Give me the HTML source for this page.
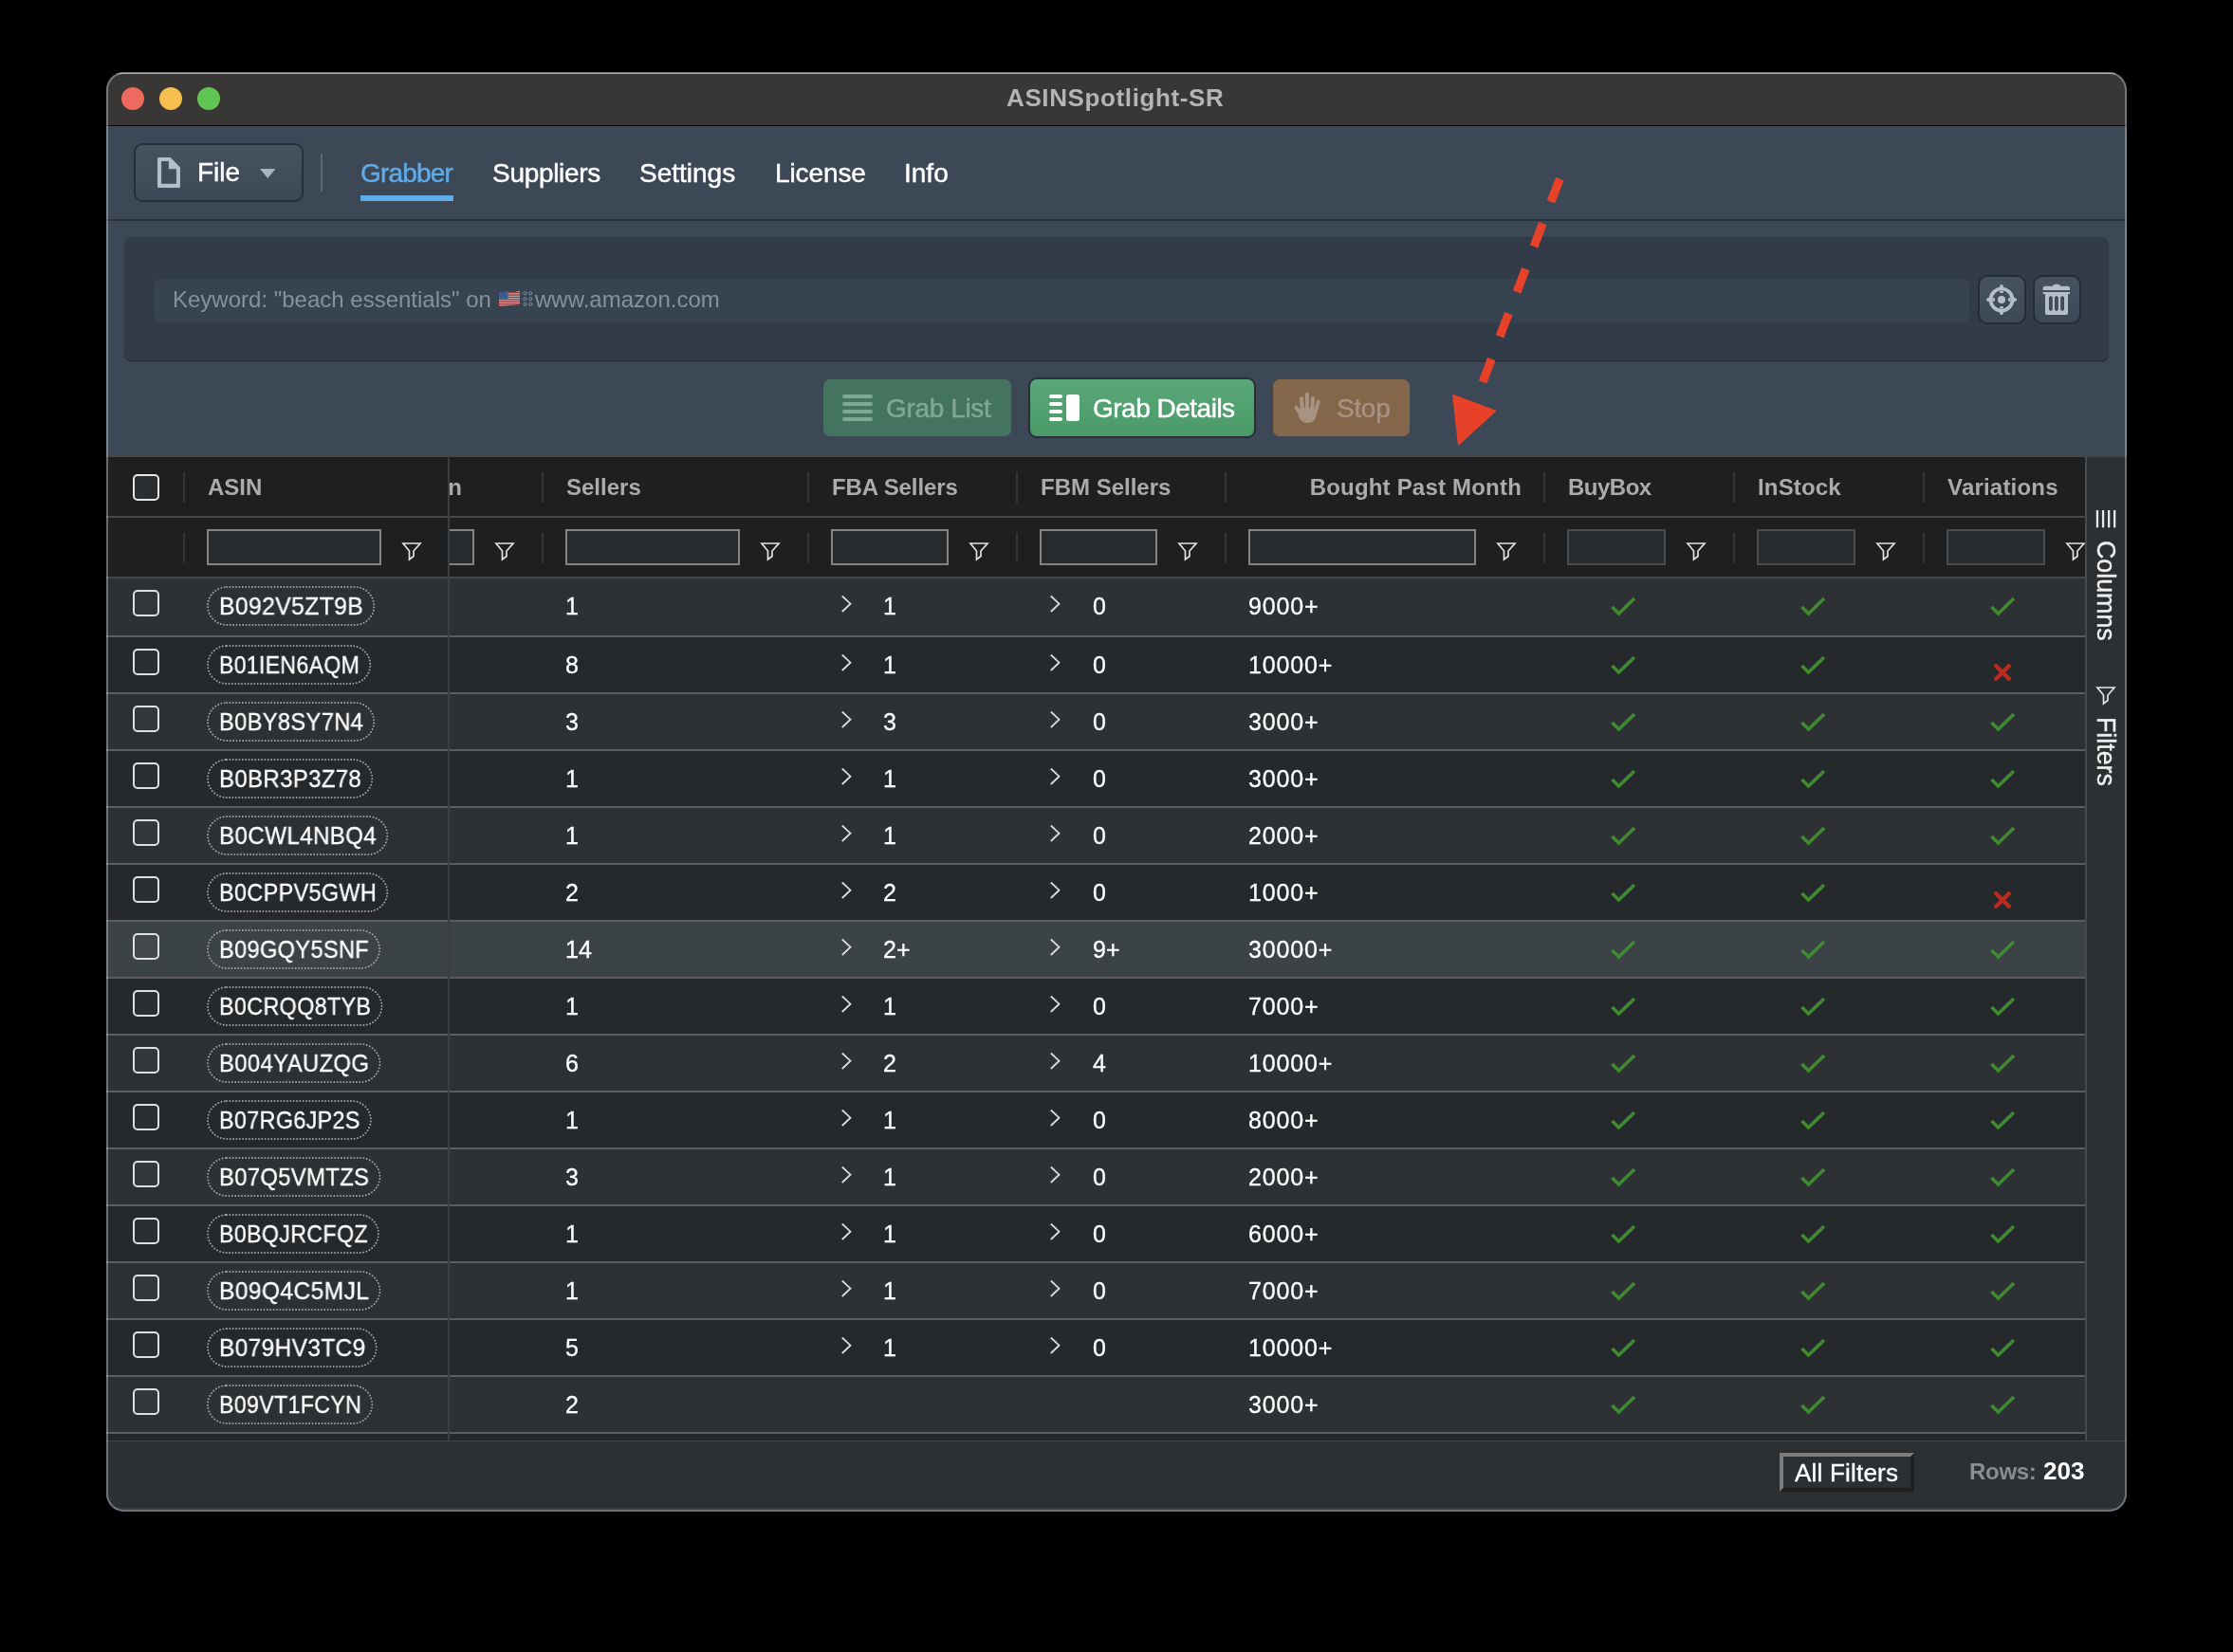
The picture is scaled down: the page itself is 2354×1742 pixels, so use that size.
<!DOCTYPE html>
<html><head><meta charset="utf-8"><title>ASINSpotlight-SR</title>
<style>
html,body{margin:0;padding:0;background:#000;width:2354px;height:1742px;overflow:hidden;font-family:"Liberation Sans", sans-serif;}
.t{position:absolute;white-space:pre;will-change:transform;}
.b{position:absolute;box-sizing:border-box;}
svg{position:absolute;overflow:visible;}
#win{position:absolute;left:0;top:0;width:2354px;height:1742px;clip-path:inset(76px 112px 148px 112px round 19px);}
</style></head><body>
<div id="win">

<div class="b" style="left:112px;top:76px;width:2130px;height:1518px;background:#3c4855;"></div>
<div class="b" style="left:112px;top:76px;width:2130px;height:56px;background:#383735;"></div>
<div class="b" style="left:112px;top:76.5px;width:2130px;height:1.6px;background:#888886;"></div>
<div class="b" style="left:112px;top:131.5px;width:2130px;height:1.5px;background:#0a0a0a;"></div>
<div class="b" style="left:128px;top:92px;width:24px;height:24px;background:#ee6a5f;border-radius:50%;"></div>
<div class="b" style="left:168px;top:92px;width:24px;height:24px;background:#f5be4f;border-radius:50%;"></div>
<div class="b" style="left:208px;top:92px;width:24px;height:24px;background:#61c554;border-radius:50%;"></div>
<div class="t" style="left:1060.5px;top:89.99px;font-size:26px;line-height:26px;color:#b4b4b2;font-weight:700;letter-spacing:0.62px;">ASINSpotlight-SR</div>
<div class="b" style="left:112px;top:231px;width:2130px;height:2px;background:#2a323b;"></div>
<div class="b" style="left:141px;top:151px;width:179px;height:62px;background:linear-gradient(#46535f,#3d4956);border:2px solid #27303a;border-radius:9px;"></div>
<svg style="left:166px;top:166px" width="24" height="32" viewBox="0 0 24 32"><path fill-rule="evenodd" d="M1.5 0 H13.6 L24 10.5 V30.5 Q24 32 22.5 32 H1.5 Q0 32 0 30.5 V1.5 Q0 0 1.5 0 Z M4.1 4.1 H11.9 V12.2 H19.9 V27.8 H4.1 Z" fill="#b4bec9"/></svg>
<div class="t" style="left:207.5px;top:168.10px;font-size:28px;line-height:28px;color:#ffffff;-webkit-text-stroke:0.45px #fff;">File</div>
<svg style="left:274px;top:178px" width="17" height="10" viewBox="0 0 17 10"><path d="M0 0 H16.5 L8.25 10 Z" fill="#aab4bf"/></svg>
<div class="b" style="left:338px;top:162px;width:2px;height:40px;background:#5c6670;"></div>
<div class="t" style="left:380px;top:168.60px;font-size:28px;line-height:28px;color:#5eacea;letter-spacing:-0.8px;-webkit-text-stroke:0.45px #5eacea;">Grabber</div>
<div class="b" style="left:380px;top:206px;width:98px;height:6px;background:#5eacea;"></div>
<div class="t" style="left:519px;top:168.60px;font-size:28px;line-height:28px;color:#ffffff;letter-spacing:-0.3px;-webkit-text-stroke:0.45px #fff;">Suppliers</div>
<div class="t" style="left:674px;top:168.60px;font-size:28px;line-height:28px;color:#ffffff;-webkit-text-stroke:0.45px #fff;">Settings</div>
<div class="t" style="left:817px;top:168.60px;font-size:28px;line-height:28px;color:#ffffff;letter-spacing:-0.1px;-webkit-text-stroke:0.45px #fff;">License</div>
<div class="t" style="left:952.5px;top:168.60px;font-size:28px;line-height:28px;color:#ffffff;-webkit-text-stroke:0.45px #fff;">Info</div>
<div class="b" style="left:131px;top:250px;width:2092px;height:130px;background:#323c48;border-radius:8px;box-shadow:0 1.5px 0 #252e38;"></div>
<div class="b" style="left:162px;top:294px;width:1914px;height:46px;background:#374350;border-radius:7px;"></div>
<div class="t" style="left:182px;top:303.68px;font-size:24px;line-height:24px;color:#8592a0;">Keyword: "beach essentials" on </div>
<svg style="left:526px;top:307px;opacity:0.7" width="22" height="16" viewBox="0 0 22 16">
<defs><clipPath id="fl"><path d="M0 1.5 Q6 0.5 11 1 T22 0 V14 Q16 14.5 11 15 T0 16 Z"/></clipPath></defs>
<g clip-path="url(#fl)"><rect width="22" height="16" fill="#e8e8e8"/>
<rect y="1" width="22" height="1.3" fill="#c33"/><rect y="3.4" width="22" height="1.3" fill="#c33"/><rect y="5.8" width="22" height="1.3" fill="#c33"/><rect y="8.2" width="22" height="1.3" fill="#c33"/><rect y="10.6" width="22" height="1.3" fill="#c33"/><rect y="13" width="22" height="1.3" fill="#c33"/><rect y="15.2" width="22" height="1.3" fill="#c33"/>
<rect width="9.5" height="8" fill="#3b6aa8"/></g></svg>
<svg style="left:551px;top:307px" width="11" height="16" viewBox="0 0 11 16"><circle cx="2.5" cy="2.3" r="1.6" fill="none" stroke="#8592a0" stroke-width="1"/><circle cx="2.5" cy="8.2" r="1.6" fill="none" stroke="#8592a0" stroke-width="1"/><circle cx="2.5" cy="13.8" r="1.6" fill="none" stroke="#8592a0" stroke-width="1"/><circle cx="8.3" cy="2.3" r="1.6" fill="none" stroke="#8592a0" stroke-width="1"/><circle cx="8.3" cy="8.2" r="1.6" fill="none" stroke="#8592a0" stroke-width="1"/><circle cx="8.3" cy="13.8" r="1.6" fill="none" stroke="#8592a0" stroke-width="1"/></svg>
<div class="t" style="left:564px;top:303.68px;font-size:24px;line-height:24px;color:#8592a0;">www.amazon.com</div>
<div class="b" style="left:2084.5px;top:290px;width:51px;height:51.5px;background:linear-gradient(#46535f,#3d4856);border:2px solid #242c35;border-radius:10px;"></div>
<div class="b" style="left:2142.5px;top:290px;width:51px;height:51.5px;background:linear-gradient(#46535f,#3d4856);border:2px solid #242c35;border-radius:10px;"></div>
<svg style="left:2094px;top:300px" width="32" height="32" viewBox="0 0 32 32">
<circle cx="16" cy="16" r="11.5" fill="none" stroke="#b4bec9" stroke-width="3.7"/>
<circle cx="16" cy="16" r="4" fill="#b4bec9"/>
<g fill="#b4bec9">
<path d="M13.3 5 L14.6 0.6 Q16 -0.6 17.4 0.6 L18.7 5 Z"/><path d="M13.3 27 L14.6 31.4 Q16 32.6 17.4 31.4 L18.7 27 Z"/>
<path d="M5 13.3 L0.6 14.6 Q-0.6 16 0.6 17.4 L5 18.7 Z"/><path d="M27 13.3 L31.4 14.6 Q32.6 16 31.4 17.4 L27 18.7 Z"/>
<rect x="14.1" y="6.5" width="3.8" height="2.5" rx="1.2"/><rect x="14.1" y="23" width="3.8" height="2.5" rx="1.2"/>
<rect x="6.5" y="14.1" width="2.5" height="3.8" rx="1.2"/><rect x="23" y="14.1" width="2.5" height="3.8" rx="1.2"/>
</g>
</svg>
<svg style="left:2153px;top:299px" width="30" height="34" viewBox="0 0 30 34">
<g fill="#b4bec9">
<path d="M10.8 2.9 Q11.5 0.8 14 0.8 H16 Q18.5 0.8 19.2 2.9 Z"/>
<path d="M0.7 7.1 V5 Q0.7 2.8 3 2.8 H26.8 Q29 2.8 29 5 V7.1 Z"/>
<path d="M0.7 9 H29 V11 H27 V31 Q27 33 25 33 H5 Q3 33 3 31 V11 H0.7 Z"/>
</g>
<g fill="#3f4a57">
<rect x="7" y="13.2" width="3.8" height="15.5" rx="1.9"/><rect x="13" y="13.2" width="3.8" height="15.5" rx="1.9"/><rect x="19.2" y="13.2" width="3.8" height="15.5" rx="1.9"/>
</g>
</svg>
<div class="b" style="left:868px;top:400px;width:198px;height:60px;background:#44735f;border-radius:7px;"></div>
<svg style="left:888px;top:416px" width="32" height="28" viewBox="0 0 32 28"><rect x="0" y="0" width="32" height="4" rx="2" fill="#7ea897"/><rect x="0" y="8" width="32" height="4" rx="2" fill="#7ea897"/><rect x="0" y="16" width="32" height="4" rx="2" fill="#7ea897"/><rect x="0" y="24" width="32" height="4" rx="2" fill="#7ea897"/></svg>
<div class="t" style="left:934px;top:416.90px;font-size:28px;line-height:28px;color:#80a898;letter-spacing:-0.35px;-webkit-text-stroke:0.45px #80a898;">Grab List</div>
<div class="b" style="left:1084px;top:398px;width:240px;height:64px;background:#27303a;border-radius:9px;"></div>
<div class="b" style="left:1086px;top:400px;width:236px;height:60px;background:linear-gradient(#5aa779,#4a9a67);border-radius:7px;"></div>
<svg style="left:1106px;top:416px" width="32" height="28" viewBox="0 0 32 28"><rect x="0" y="0" width="14" height="4" rx="2" fill="#fff"/><rect x="0" y="8" width="14" height="4" rx="2" fill="#fff"/><rect x="0" y="16" width="14" height="4" rx="2" fill="#fff"/><rect x="0" y="24" width="14" height="4" rx="2" fill="#fff"/><rect x="18" y="0" width="14" height="28" rx="2.5" fill="#fff"/></svg>
<div class="t" style="left:1152px;top:416.90px;font-size:28px;line-height:28px;color:#ffffff;letter-spacing:-0.5px;-webkit-text-stroke:0.45px #fff;">Grab Details</div>
<div class="b" style="left:1342px;top:400px;width:144px;height:60px;background:#84664b;border-radius:7px;"></div>
<svg style="left:1355px;top:405px" width="50" height="50" viewBox="0 0 50 50">
<g stroke="#a89382" stroke-width="4" stroke-linecap="round" fill="none">
<path d="M11.3 24.6 L17 33"/><path d="M17 15.2 L18.2 29"/><path d="M22.9 10.7 L22.9 26"/><path d="M29 14.9 L28.2 26"/><path d="M34.8 18.6 L32.2 28"/>
</g>
<path d="M15.5 25 L34 25.5 L32.8 32.5 Q31.5 41 23 41 Q16.5 41 13.5 33 Z" fill="#a89382"/>
</svg>
<div class="t" style="left:1409px;top:416.90px;font-size:28px;line-height:28px;color:#a89282;letter-spacing:-0.3px;-webkit-text-stroke:0.45px #a89282;">Stop</div>
<div class="b" style="left:112px;top:481px;width:2087px;height:1038px;background:#25282b;"></div>
<div class="b" style="left:112px;top:481px;width:2087px;height:63px;background:#1e1f21;"></div>
<div class="b" style="left:112px;top:480px;width:2130px;height:2px;background:#474747;"></div>
<div class="b" style="left:112px;top:544px;width:2087px;height:2px;background:#474747;"></div>
<div class="b" style="left:112px;top:546px;width:2087px;height:62px;background:#1e1f21;"></div>
<div class="b" style="left:112px;top:608px;width:2087px;height:2px;background:#474747;"></div>
<div class="b" style="left:192.5px;top:498px;width:2px;height:32px;background:#343538;"></div>
<div class="b" style="left:192.5px;top:562px;width:2px;height:31px;background:#343538;"></div>
<div class="b" style="left:570.5px;top:498px;width:2px;height:32px;background:#343538;"></div>
<div class="b" style="left:570.5px;top:562px;width:2px;height:31px;background:#343538;"></div>
<div class="b" style="left:850.5px;top:498px;width:2px;height:32px;background:#343538;"></div>
<div class="b" style="left:850.5px;top:562px;width:2px;height:31px;background:#343538;"></div>
<div class="b" style="left:1070.5px;top:498px;width:2px;height:32px;background:#343538;"></div>
<div class="b" style="left:1070.5px;top:562px;width:2px;height:31px;background:#343538;"></div>
<div class="b" style="left:1290.5px;top:498px;width:2px;height:32px;background:#343538;"></div>
<div class="b" style="left:1290.5px;top:562px;width:2px;height:31px;background:#343538;"></div>
<div class="b" style="left:1626.5px;top:498px;width:2px;height:32px;background:#343538;"></div>
<div class="b" style="left:1626.5px;top:562px;width:2px;height:31px;background:#343538;"></div>
<div class="b" style="left:1826.5px;top:498px;width:2px;height:32px;background:#343538;"></div>
<div class="b" style="left:1826.5px;top:562px;width:2px;height:31px;background:#343538;"></div>
<div class="b" style="left:2026.5px;top:498px;width:2px;height:32px;background:#343538;"></div>
<div class="b" style="left:2026.5px;top:562px;width:2px;height:31px;background:#343538;"></div>
<div class="t" style="left:219px;top:502.28px;font-size:24px;line-height:24px;color:#ababab;font-weight:700;">ASIN</div>
<div class="t" style="left:597px;top:502.28px;font-size:24px;line-height:24px;color:#ababab;font-weight:700;">Sellers</div>
<div class="t" style="left:877px;top:502.28px;font-size:24px;line-height:24px;color:#ababab;font-weight:700;letter-spacing:-0.1px;">FBA Sellers</div>
<div class="t" style="left:1097px;top:502.28px;font-size:24px;line-height:24px;color:#ababab;font-weight:700;">FBM Sellers</div>
<div class="t" style="left:1290px;width:314px;text-align:right;top:502.28px;font-size:24px;line-height:24px;color:#ababab;font-weight:700;letter-spacing:0.2px">Bought Past Month</div>
<div class="t" style="left:1653px;top:502.28px;font-size:24px;line-height:24px;color:#ababab;font-weight:700;letter-spacing:-0.5px;">BuyBox</div>
<div class="t" style="left:1853px;top:502.28px;font-size:24px;line-height:24px;color:#ababab;font-weight:700;letter-spacing:0.15px;">InStock</div>
<div class="t" style="left:2053px;top:502.28px;font-size:24px;line-height:24px;color:#ababab;font-weight:700;letter-spacing:0.2px;">Variations</div>
<div class="b" style="left:140px;top:500px;width:28px;height:28px;background:#2b2e31;border:2.5px solid #e6e6e6;border-radius:5px;"></div>
<div class="b" style="left:218px;top:558px;width:184px;height:38px;background:#272b2e;border:2px solid #858585;"></div>
<svg style="left:424px;top:572px" width="20" height="20" viewBox="0 0 20 20"><path d="M1 1 L19 1 L12 9 L12 14.5 L7.5 18 L7.5 9 Z" fill="none" stroke="#e2e2e2" stroke-width="1.7" stroke-linejoin="miter"/></svg>
<div class="b" style="left:596px;top:558px;width:184px;height:38px;background:#272b2e;border:2px solid #858585;"></div>
<svg style="left:802px;top:572px" width="20" height="20" viewBox="0 0 20 20"><path d="M1 1 L19 1 L12 9 L12 14.5 L7.5 18 L7.5 9 Z" fill="none" stroke="#e2e2e2" stroke-width="1.7" stroke-linejoin="miter"/></svg>
<div class="b" style="left:876px;top:558px;width:124px;height:38px;background:#272b2e;border:2px solid #858585;"></div>
<svg style="left:1022px;top:572px" width="20" height="20" viewBox="0 0 20 20"><path d="M1 1 L19 1 L12 9 L12 14.5 L7.5 18 L7.5 9 Z" fill="none" stroke="#e2e2e2" stroke-width="1.7" stroke-linejoin="miter"/></svg>
<div class="b" style="left:1096px;top:558px;width:124px;height:38px;background:#272b2e;border:2px solid #858585;"></div>
<svg style="left:1242px;top:572px" width="20" height="20" viewBox="0 0 20 20"><path d="M1 1 L19 1 L12 9 L12 14.5 L7.5 18 L7.5 9 Z" fill="none" stroke="#e2e2e2" stroke-width="1.7" stroke-linejoin="miter"/></svg>
<div class="b" style="left:1316px;top:558px;width:240px;height:38px;background:#272b2e;border:2px solid #858585;"></div>
<svg style="left:1578px;top:572px" width="20" height="20" viewBox="0 0 20 20"><path d="M1 1 L19 1 L12 9 L12 14.5 L7.5 18 L7.5 9 Z" fill="none" stroke="#e2e2e2" stroke-width="1.7" stroke-linejoin="miter"/></svg>
<div class="b" style="left:1652px;top:558px;width:104px;height:38px;background:#272b2e;border:2px solid #4a4c4e;"></div>
<svg style="left:1778px;top:572px" width="20" height="20" viewBox="0 0 20 20"><path d="M1 1 L19 1 L12 9 L12 14.5 L7.5 18 L7.5 9 Z" fill="none" stroke="#e2e2e2" stroke-width="1.7" stroke-linejoin="miter"/></svg>
<div class="b" style="left:1852px;top:558px;width:104px;height:38px;background:#272b2e;border:2px solid #4a4c4e;"></div>
<svg style="left:1978px;top:572px" width="20" height="20" viewBox="0 0 20 20"><path d="M1 1 L19 1 L12 9 L12 14.5 L7.5 18 L7.5 9 Z" fill="none" stroke="#e2e2e2" stroke-width="1.7" stroke-linejoin="miter"/></svg>
<div class="b" style="left:2052px;top:558px;width:104px;height:38px;background:#272b2e;border:2px solid #4a4c4e;"></div>
<svg style="left:2178px;top:572px" width="20" height="20" viewBox="0 0 20 20"><path d="M1 1 L19 1 L12 9 L12 14.5 L7.5 18 L7.5 9 Z" fill="none" stroke="#e2e2e2" stroke-width="1.7" stroke-linejoin="miter"/></svg>
<div class="b" style="left:112px;top:610px;width:2087px;height:60px;background:#2d3134;"></div>
<div class="b" style="left:112px;top:670px;width:2087px;height:2px;background:#5c5c5c;"></div>
<div class="b" style="left:140px;top:622.0px;width:28px;height:28px;background:rgba(255,255,255,0.03);border:2.3px solid #e0e0e0;border-radius:5px;"></div>
<svg style="left:218px;top:618.0px" width="177.3" height="42" viewBox="0 0 177.3 42"><rect x="1" y="1" width="175.3" height="40" rx="20" fill="none" stroke="#a4a4a4" stroke-width="1.9" stroke-dasharray="0.01 3.35" stroke-linecap="round"/></svg>
<div class="t" style="left:230.5px;top:627.24px;font-size:25px;line-height:25px;color:#fff;letter-spacing:0.35px;-webkit-text-stroke:0.3px #fff;transform:scaleX(0.9906);transform-origin:0 50%;">B092V5ZT9B</div>
<div class="t" style="left:595.5px;top:627.24px;font-size:25px;line-height:25px;color:#fff;-webkit-text-stroke:0.3px #fff;">1</div>
<svg style="left:887px;top:627.5px" width="10" height="18" viewBox="0 0 10 18"><path d="M0.8 0.5 L9.5 8.7 L0.8 17" fill="none" stroke="#dcdcdc" stroke-width="1.8"/></svg>
<div class="t" style="left:931px;top:627.24px;font-size:25px;line-height:25px;color:#fff;-webkit-text-stroke:0.3px #fff;">1</div>
<svg style="left:1107px;top:627.5px" width="10" height="18" viewBox="0 0 10 18"><path d="M0.8 0.5 L9.5 8.7 L0.8 17" fill="none" stroke="#dcdcdc" stroke-width="1.8"/></svg>
<div class="t" style="left:1152px;top:627.24px;font-size:25px;line-height:25px;color:#fff;-webkit-text-stroke:0.3px #fff;">0</div>
<div class="t" style="left:1315.5px;top:627.24px;font-size:25px;line-height:25px;color:#fff;letter-spacing:0.85px;-webkit-text-stroke:0.3px #fff;">9000+</div>
<svg style="left:1698px;top:630.0px" width="27" height="20" viewBox="0 0 27 20"><path d="M1.5 10 L8.5 17 L25 1" fill="none" stroke="#3f8c2e" stroke-width="3.6"/></svg>
<svg style="left:1898px;top:630.0px" width="27" height="20" viewBox="0 0 27 20"><path d="M1.5 10 L8.5 17 L25 1" fill="none" stroke="#3f8c2e" stroke-width="3.6"/></svg>
<svg style="left:2098px;top:630.0px" width="27" height="20" viewBox="0 0 27 20"><path d="M1.5 10 L8.5 17 L25 1" fill="none" stroke="#3f8c2e" stroke-width="3.6"/></svg>
<div class="b" style="left:112px;top:672px;width:2087px;height:58px;background:#26292c;"></div>
<div class="b" style="left:112px;top:730px;width:2087px;height:2px;background:#5c5c5c;"></div>
<div class="b" style="left:140px;top:684.2px;width:28px;height:28px;background:rgba(255,255,255,0.03);border:2.3px solid #e0e0e0;border-radius:5px;"></div>
<svg style="left:218px;top:680.2px" width="173.3" height="42" viewBox="0 0 173.3 42"><rect x="1" y="1" width="171.3" height="40" rx="20" fill="none" stroke="#a4a4a4" stroke-width="1.9" stroke-dasharray="0.01 3.35" stroke-linecap="round"/></svg>
<div class="t" style="left:230.5px;top:689.44px;font-size:25px;line-height:25px;color:#fff;letter-spacing:0.35px;-webkit-text-stroke:0.3px #fff;transform:scaleX(0.9230);transform-origin:0 50%;">B01IEN6AQM</div>
<div class="t" style="left:595.5px;top:689.44px;font-size:25px;line-height:25px;color:#fff;-webkit-text-stroke:0.3px #fff;">8</div>
<svg style="left:887px;top:689.7px" width="10" height="18" viewBox="0 0 10 18"><path d="M0.8 0.5 L9.5 8.7 L0.8 17" fill="none" stroke="#dcdcdc" stroke-width="1.8"/></svg>
<div class="t" style="left:931px;top:689.44px;font-size:25px;line-height:25px;color:#fff;-webkit-text-stroke:0.3px #fff;">1</div>
<svg style="left:1107px;top:689.7px" width="10" height="18" viewBox="0 0 10 18"><path d="M0.8 0.5 L9.5 8.7 L0.8 17" fill="none" stroke="#dcdcdc" stroke-width="1.8"/></svg>
<div class="t" style="left:1152px;top:689.44px;font-size:25px;line-height:25px;color:#fff;-webkit-text-stroke:0.3px #fff;">0</div>
<div class="t" style="left:1315.5px;top:689.44px;font-size:25px;line-height:25px;color:#fff;letter-spacing:0.85px;-webkit-text-stroke:0.3px #fff;">10000+</div>
<svg style="left:1698px;top:692.2px" width="27" height="20" viewBox="0 0 27 20"><path d="M1.5 10 L8.5 17 L25 1" fill="none" stroke="#3f8c2e" stroke-width="3.6"/></svg>
<svg style="left:1898px;top:692.2px" width="27" height="20" viewBox="0 0 27 20"><path d="M1.5 10 L8.5 17 L25 1" fill="none" stroke="#3f8c2e" stroke-width="3.6"/></svg>
<svg style="left:2102px;top:700.0px" width="18" height="18" viewBox="0 0 18 18"><path d="M2.2 2.2 L15.8 15.8 M15.8 2.2 L2.2 15.8" fill="none" stroke="#bf2a1f" stroke-width="4.3" stroke-linecap="round"/></svg>
<div class="b" style="left:112px;top:732px;width:2087px;height:58px;background:#2d3134;"></div>
<div class="b" style="left:112px;top:790px;width:2087px;height:2px;background:#5c5c5c;"></div>
<div class="b" style="left:140px;top:744.2px;width:28px;height:28px;background:rgba(255,255,255,0.03);border:2.3px solid #e0e0e0;border-radius:5px;"></div>
<svg style="left:218px;top:740.2px" width="177.3" height="42" viewBox="0 0 177.3 42"><rect x="1" y="1" width="175.3" height="40" rx="20" fill="none" stroke="#a4a4a4" stroke-width="1.9" stroke-dasharray="0.01 3.35" stroke-linecap="round"/></svg>
<div class="t" style="left:230.5px;top:749.44px;font-size:25px;line-height:25px;color:#fff;letter-spacing:0.35px;-webkit-text-stroke:0.3px #fff;transform:scaleX(0.9477);transform-origin:0 50%;">B0BY8SY7N4</div>
<div class="t" style="left:595.5px;top:749.44px;font-size:25px;line-height:25px;color:#fff;-webkit-text-stroke:0.3px #fff;">3</div>
<svg style="left:887px;top:749.7px" width="10" height="18" viewBox="0 0 10 18"><path d="M0.8 0.5 L9.5 8.7 L0.8 17" fill="none" stroke="#dcdcdc" stroke-width="1.8"/></svg>
<div class="t" style="left:931px;top:749.44px;font-size:25px;line-height:25px;color:#fff;-webkit-text-stroke:0.3px #fff;">3</div>
<svg style="left:1107px;top:749.7px" width="10" height="18" viewBox="0 0 10 18"><path d="M0.8 0.5 L9.5 8.7 L0.8 17" fill="none" stroke="#dcdcdc" stroke-width="1.8"/></svg>
<div class="t" style="left:1152px;top:749.44px;font-size:25px;line-height:25px;color:#fff;-webkit-text-stroke:0.3px #fff;">0</div>
<div class="t" style="left:1315.5px;top:749.44px;font-size:25px;line-height:25px;color:#fff;letter-spacing:0.85px;-webkit-text-stroke:0.3px #fff;">3000+</div>
<svg style="left:1698px;top:752.2px" width="27" height="20" viewBox="0 0 27 20"><path d="M1.5 10 L8.5 17 L25 1" fill="none" stroke="#3f8c2e" stroke-width="3.6"/></svg>
<svg style="left:1898px;top:752.2px" width="27" height="20" viewBox="0 0 27 20"><path d="M1.5 10 L8.5 17 L25 1" fill="none" stroke="#3f8c2e" stroke-width="3.6"/></svg>
<svg style="left:2098px;top:752.2px" width="27" height="20" viewBox="0 0 27 20"><path d="M1.5 10 L8.5 17 L25 1" fill="none" stroke="#3f8c2e" stroke-width="3.6"/></svg>
<div class="b" style="left:112px;top:792px;width:2087px;height:58px;background:#26292c;"></div>
<div class="b" style="left:112px;top:850px;width:2087px;height:2px;background:#5c5c5c;"></div>
<div class="b" style="left:140px;top:804.2px;width:28px;height:28px;background:rgba(255,255,255,0.03);border:2.3px solid #e0e0e0;border-radius:5px;"></div>
<svg style="left:218px;top:800.2px" width="175.3" height="42" viewBox="0 0 175.3 42"><rect x="1" y="1" width="173.3" height="40" rx="20" fill="none" stroke="#a4a4a4" stroke-width="1.9" stroke-dasharray="0.01 3.35" stroke-linecap="round"/></svg>
<div class="t" style="left:230.5px;top:809.44px;font-size:25px;line-height:25px;color:#fff;letter-spacing:0.35px;-webkit-text-stroke:0.3px #fff;transform:scaleX(0.9602);transform-origin:0 50%;">B0BR3P3Z78</div>
<div class="t" style="left:595.5px;top:809.44px;font-size:25px;line-height:25px;color:#fff;-webkit-text-stroke:0.3px #fff;">1</div>
<svg style="left:887px;top:809.7px" width="10" height="18" viewBox="0 0 10 18"><path d="M0.8 0.5 L9.5 8.7 L0.8 17" fill="none" stroke="#dcdcdc" stroke-width="1.8"/></svg>
<div class="t" style="left:931px;top:809.44px;font-size:25px;line-height:25px;color:#fff;-webkit-text-stroke:0.3px #fff;">1</div>
<svg style="left:1107px;top:809.7px" width="10" height="18" viewBox="0 0 10 18"><path d="M0.8 0.5 L9.5 8.7 L0.8 17" fill="none" stroke="#dcdcdc" stroke-width="1.8"/></svg>
<div class="t" style="left:1152px;top:809.44px;font-size:25px;line-height:25px;color:#fff;-webkit-text-stroke:0.3px #fff;">0</div>
<div class="t" style="left:1315.5px;top:809.44px;font-size:25px;line-height:25px;color:#fff;letter-spacing:0.85px;-webkit-text-stroke:0.3px #fff;">3000+</div>
<svg style="left:1698px;top:812.2px" width="27" height="20" viewBox="0 0 27 20"><path d="M1.5 10 L8.5 17 L25 1" fill="none" stroke="#3f8c2e" stroke-width="3.6"/></svg>
<svg style="left:1898px;top:812.2px" width="27" height="20" viewBox="0 0 27 20"><path d="M1.5 10 L8.5 17 L25 1" fill="none" stroke="#3f8c2e" stroke-width="3.6"/></svg>
<svg style="left:2098px;top:812.2px" width="27" height="20" viewBox="0 0 27 20"><path d="M1.5 10 L8.5 17 L25 1" fill="none" stroke="#3f8c2e" stroke-width="3.6"/></svg>
<div class="b" style="left:112px;top:852px;width:2087px;height:58px;background:#2d3134;"></div>
<div class="b" style="left:112px;top:910px;width:2087px;height:2px;background:#5c5c5c;"></div>
<div class="b" style="left:140px;top:864.2px;width:28px;height:28px;background:rgba(255,255,255,0.03);border:2.3px solid #e0e0e0;border-radius:5px;"></div>
<svg style="left:218px;top:860.2px" width="191.3" height="42" viewBox="0 0 191.3 42"><rect x="1" y="1" width="189.3" height="40" rx="20" fill="none" stroke="#a4a4a4" stroke-width="1.9" stroke-dasharray="0.01 3.35" stroke-linecap="round"/></svg>
<div class="t" style="left:230.5px;top:869.44px;font-size:25px;line-height:25px;color:#fff;letter-spacing:0.35px;-webkit-text-stroke:0.3px #fff;transform:scaleX(0.9681);transform-origin:0 50%;">B0CWL4NBQ4</div>
<div class="t" style="left:595.5px;top:869.44px;font-size:25px;line-height:25px;color:#fff;-webkit-text-stroke:0.3px #fff;">1</div>
<svg style="left:887px;top:869.7px" width="10" height="18" viewBox="0 0 10 18"><path d="M0.8 0.5 L9.5 8.7 L0.8 17" fill="none" stroke="#dcdcdc" stroke-width="1.8"/></svg>
<div class="t" style="left:931px;top:869.44px;font-size:25px;line-height:25px;color:#fff;-webkit-text-stroke:0.3px #fff;">1</div>
<svg style="left:1107px;top:869.7px" width="10" height="18" viewBox="0 0 10 18"><path d="M0.8 0.5 L9.5 8.7 L0.8 17" fill="none" stroke="#dcdcdc" stroke-width="1.8"/></svg>
<div class="t" style="left:1152px;top:869.44px;font-size:25px;line-height:25px;color:#fff;-webkit-text-stroke:0.3px #fff;">0</div>
<div class="t" style="left:1315.5px;top:869.44px;font-size:25px;line-height:25px;color:#fff;letter-spacing:0.85px;-webkit-text-stroke:0.3px #fff;">2000+</div>
<svg style="left:1698px;top:872.2px" width="27" height="20" viewBox="0 0 27 20"><path d="M1.5 10 L8.5 17 L25 1" fill="none" stroke="#3f8c2e" stroke-width="3.6"/></svg>
<svg style="left:1898px;top:872.2px" width="27" height="20" viewBox="0 0 27 20"><path d="M1.5 10 L8.5 17 L25 1" fill="none" stroke="#3f8c2e" stroke-width="3.6"/></svg>
<svg style="left:2098px;top:872.2px" width="27" height="20" viewBox="0 0 27 20"><path d="M1.5 10 L8.5 17 L25 1" fill="none" stroke="#3f8c2e" stroke-width="3.6"/></svg>
<div class="b" style="left:112px;top:912px;width:2087px;height:58px;background:#26292c;"></div>
<div class="b" style="left:112px;top:970px;width:2087px;height:2px;background:#5c5c5c;"></div>
<div class="b" style="left:140px;top:924.2px;width:28px;height:28px;background:rgba(255,255,255,0.03);border:2.3px solid #e0e0e0;border-radius:5px;"></div>
<svg style="left:218px;top:920.2px" width="191.3" height="42" viewBox="0 0 191.3 42"><rect x="1" y="1" width="189.3" height="40" rx="20" fill="none" stroke="#a4a4a4" stroke-width="1.9" stroke-dasharray="0.01 3.35" stroke-linecap="round"/></svg>
<div class="t" style="left:230.5px;top:929.44px;font-size:25px;line-height:25px;color:#fff;letter-spacing:0.35px;-webkit-text-stroke:0.3px #fff;transform:scaleX(0.9378);transform-origin:0 50%;">B0CPPV5GWH</div>
<div class="t" style="left:595.5px;top:929.44px;font-size:25px;line-height:25px;color:#fff;-webkit-text-stroke:0.3px #fff;">2</div>
<svg style="left:887px;top:929.7px" width="10" height="18" viewBox="0 0 10 18"><path d="M0.8 0.5 L9.5 8.7 L0.8 17" fill="none" stroke="#dcdcdc" stroke-width="1.8"/></svg>
<div class="t" style="left:931px;top:929.44px;font-size:25px;line-height:25px;color:#fff;-webkit-text-stroke:0.3px #fff;">2</div>
<svg style="left:1107px;top:929.7px" width="10" height="18" viewBox="0 0 10 18"><path d="M0.8 0.5 L9.5 8.7 L0.8 17" fill="none" stroke="#dcdcdc" stroke-width="1.8"/></svg>
<div class="t" style="left:1152px;top:929.44px;font-size:25px;line-height:25px;color:#fff;-webkit-text-stroke:0.3px #fff;">0</div>
<div class="t" style="left:1315.5px;top:929.44px;font-size:25px;line-height:25px;color:#fff;letter-spacing:0.85px;-webkit-text-stroke:0.3px #fff;">1000+</div>
<svg style="left:1698px;top:932.2px" width="27" height="20" viewBox="0 0 27 20"><path d="M1.5 10 L8.5 17 L25 1" fill="none" stroke="#3f8c2e" stroke-width="3.6"/></svg>
<svg style="left:1898px;top:932.2px" width="27" height="20" viewBox="0 0 27 20"><path d="M1.5 10 L8.5 17 L25 1" fill="none" stroke="#3f8c2e" stroke-width="3.6"/></svg>
<svg style="left:2102px;top:940.0px" width="18" height="18" viewBox="0 0 18 18"><path d="M2.2 2.2 L15.8 15.8 M15.8 2.2 L2.2 15.8" fill="none" stroke="#bf2a1f" stroke-width="4.3" stroke-linecap="round"/></svg>
<div class="b" style="left:112px;top:972px;width:2087px;height:58px;background:#3c4346;"></div>
<div class="b" style="left:112px;top:1030px;width:2087px;height:2px;background:#5c5c5c;"></div>
<div class="b" style="left:140px;top:984.2px;width:28px;height:28px;background:rgba(255,255,255,0.03);border:2.3px solid #e0e0e0;border-radius:5px;"></div>
<svg style="left:218px;top:980.2px" width="183.2" height="42" viewBox="0 0 183.2 42"><rect x="1" y="1" width="181.2" height="40" rx="20" fill="none" stroke="#a4a4a4" stroke-width="1.9" stroke-dasharray="0.01 3.35" stroke-linecap="round"/></svg>
<div class="t" style="left:230.5px;top:989.44px;font-size:25px;line-height:25px;color:#fff;letter-spacing:0.35px;-webkit-text-stroke:0.3px #fff;transform:scaleX(0.9438);transform-origin:0 50%;">B09GQY5SNF</div>
<div class="t" style="left:595.5px;top:989.44px;font-size:25px;line-height:25px;color:#fff;-webkit-text-stroke:0.3px #fff;">14</div>
<svg style="left:887px;top:989.7px" width="10" height="18" viewBox="0 0 10 18"><path d="M0.8 0.5 L9.5 8.7 L0.8 17" fill="none" stroke="#dcdcdc" stroke-width="1.8"/></svg>
<div class="t" style="left:931px;top:989.44px;font-size:25px;line-height:25px;color:#fff;-webkit-text-stroke:0.3px #fff;">2+</div>
<svg style="left:1107px;top:989.7px" width="10" height="18" viewBox="0 0 10 18"><path d="M0.8 0.5 L9.5 8.7 L0.8 17" fill="none" stroke="#dcdcdc" stroke-width="1.8"/></svg>
<div class="t" style="left:1152px;top:989.44px;font-size:25px;line-height:25px;color:#fff;-webkit-text-stroke:0.3px #fff;">9+</div>
<div class="t" style="left:1315.5px;top:989.44px;font-size:25px;line-height:25px;color:#fff;letter-spacing:0.85px;-webkit-text-stroke:0.3px #fff;">30000+</div>
<svg style="left:1698px;top:992.2px" width="27" height="20" viewBox="0 0 27 20"><path d="M1.5 10 L8.5 17 L25 1" fill="none" stroke="#3f8c2e" stroke-width="3.6"/></svg>
<svg style="left:1898px;top:992.2px" width="27" height="20" viewBox="0 0 27 20"><path d="M1.5 10 L8.5 17 L25 1" fill="none" stroke="#3f8c2e" stroke-width="3.6"/></svg>
<svg style="left:2098px;top:992.2px" width="27" height="20" viewBox="0 0 27 20"><path d="M1.5 10 L8.5 17 L25 1" fill="none" stroke="#3f8c2e" stroke-width="3.6"/></svg>
<div class="b" style="left:112px;top:1032px;width:2087px;height:58px;background:#26292c;"></div>
<div class="b" style="left:112px;top:1090px;width:2087px;height:2px;background:#5c5c5c;"></div>
<div class="b" style="left:140px;top:1044.2px;width:28px;height:28px;background:rgba(255,255,255,0.03);border:2.3px solid #e0e0e0;border-radius:5px;"></div>
<svg style="left:218px;top:1040.2px" width="185.5" height="42" viewBox="0 0 185.5 42"><rect x="1" y="1" width="183.5" height="40" rx="20" fill="none" stroke="#a4a4a4" stroke-width="1.9" stroke-dasharray="0.01 3.35" stroke-linecap="round"/></svg>
<div class="t" style="left:230.5px;top:1049.44px;font-size:25px;line-height:25px;color:#fff;letter-spacing:0.35px;-webkit-text-stroke:0.3px #fff;transform:scaleX(0.9344);transform-origin:0 50%;">B0CRQQ8TYB</div>
<div class="t" style="left:595.5px;top:1049.44px;font-size:25px;line-height:25px;color:#fff;-webkit-text-stroke:0.3px #fff;">1</div>
<svg style="left:887px;top:1049.7px" width="10" height="18" viewBox="0 0 10 18"><path d="M0.8 0.5 L9.5 8.7 L0.8 17" fill="none" stroke="#dcdcdc" stroke-width="1.8"/></svg>
<div class="t" style="left:931px;top:1049.44px;font-size:25px;line-height:25px;color:#fff;-webkit-text-stroke:0.3px #fff;">1</div>
<svg style="left:1107px;top:1049.7px" width="10" height="18" viewBox="0 0 10 18"><path d="M0.8 0.5 L9.5 8.7 L0.8 17" fill="none" stroke="#dcdcdc" stroke-width="1.8"/></svg>
<div class="t" style="left:1152px;top:1049.44px;font-size:25px;line-height:25px;color:#fff;-webkit-text-stroke:0.3px #fff;">0</div>
<div class="t" style="left:1315.5px;top:1049.44px;font-size:25px;line-height:25px;color:#fff;letter-spacing:0.85px;-webkit-text-stroke:0.3px #fff;">7000+</div>
<svg style="left:1698px;top:1052.2px" width="27" height="20" viewBox="0 0 27 20"><path d="M1.5 10 L8.5 17 L25 1" fill="none" stroke="#3f8c2e" stroke-width="3.6"/></svg>
<svg style="left:1898px;top:1052.2px" width="27" height="20" viewBox="0 0 27 20"><path d="M1.5 10 L8.5 17 L25 1" fill="none" stroke="#3f8c2e" stroke-width="3.6"/></svg>
<svg style="left:2098px;top:1052.2px" width="27" height="20" viewBox="0 0 27 20"><path d="M1.5 10 L8.5 17 L25 1" fill="none" stroke="#3f8c2e" stroke-width="3.6"/></svg>
<div class="b" style="left:112px;top:1092px;width:2087px;height:58px;background:#2d3134;"></div>
<div class="b" style="left:112px;top:1150px;width:2087px;height:2px;background:#5c5c5c;"></div>
<div class="b" style="left:140px;top:1104.2px;width:28px;height:28px;background:rgba(255,255,255,0.03);border:2.3px solid #e0e0e0;border-radius:5px;"></div>
<svg style="left:218px;top:1100.2px" width="183.4" height="42" viewBox="0 0 183.4 42"><rect x="1" y="1" width="181.4" height="40" rx="20" fill="none" stroke="#a4a4a4" stroke-width="1.9" stroke-dasharray="0.01 3.35" stroke-linecap="round"/></svg>
<div class="t" style="left:230.5px;top:1109.44px;font-size:25px;line-height:25px;color:#fff;letter-spacing:0.35px;-webkit-text-stroke:0.3px #fff;transform:scaleX(0.9556);transform-origin:0 50%;">B004YAUZQG</div>
<div class="t" style="left:595.5px;top:1109.44px;font-size:25px;line-height:25px;color:#fff;-webkit-text-stroke:0.3px #fff;">6</div>
<svg style="left:887px;top:1109.7px" width="10" height="18" viewBox="0 0 10 18"><path d="M0.8 0.5 L9.5 8.7 L0.8 17" fill="none" stroke="#dcdcdc" stroke-width="1.8"/></svg>
<div class="t" style="left:931px;top:1109.44px;font-size:25px;line-height:25px;color:#fff;-webkit-text-stroke:0.3px #fff;">2</div>
<svg style="left:1107px;top:1109.7px" width="10" height="18" viewBox="0 0 10 18"><path d="M0.8 0.5 L9.5 8.7 L0.8 17" fill="none" stroke="#dcdcdc" stroke-width="1.8"/></svg>
<div class="t" style="left:1152px;top:1109.44px;font-size:25px;line-height:25px;color:#fff;-webkit-text-stroke:0.3px #fff;">4</div>
<div class="t" style="left:1315.5px;top:1109.44px;font-size:25px;line-height:25px;color:#fff;letter-spacing:0.85px;-webkit-text-stroke:0.3px #fff;">10000+</div>
<svg style="left:1698px;top:1112.2px" width="27" height="20" viewBox="0 0 27 20"><path d="M1.5 10 L8.5 17 L25 1" fill="none" stroke="#3f8c2e" stroke-width="3.6"/></svg>
<svg style="left:1898px;top:1112.2px" width="27" height="20" viewBox="0 0 27 20"><path d="M1.5 10 L8.5 17 L25 1" fill="none" stroke="#3f8c2e" stroke-width="3.6"/></svg>
<svg style="left:2098px;top:1112.2px" width="27" height="20" viewBox="0 0 27 20"><path d="M1.5 10 L8.5 17 L25 1" fill="none" stroke="#3f8c2e" stroke-width="3.6"/></svg>
<div class="b" style="left:112px;top:1152px;width:2087px;height:58px;background:#26292c;"></div>
<div class="b" style="left:112px;top:1210px;width:2087px;height:2px;background:#5c5c5c;"></div>
<div class="b" style="left:140px;top:1164.2px;width:28px;height:28px;background:rgba(255,255,255,0.03);border:2.3px solid #e0e0e0;border-radius:5px;"></div>
<svg style="left:218px;top:1160.2px" width="173.9" height="42" viewBox="0 0 173.9 42"><rect x="1" y="1" width="171.9" height="40" rx="20" fill="none" stroke="#a4a4a4" stroke-width="1.9" stroke-dasharray="0.01 3.35" stroke-linecap="round"/></svg>
<div class="t" style="left:230.5px;top:1169.44px;font-size:25px;line-height:25px;color:#fff;letter-spacing:0.35px;-webkit-text-stroke:0.3px #fff;transform:scaleX(0.9347);transform-origin:0 50%;">B07RG6JP2S</div>
<div class="t" style="left:595.5px;top:1169.44px;font-size:25px;line-height:25px;color:#fff;-webkit-text-stroke:0.3px #fff;">1</div>
<svg style="left:887px;top:1169.7px" width="10" height="18" viewBox="0 0 10 18"><path d="M0.8 0.5 L9.5 8.7 L0.8 17" fill="none" stroke="#dcdcdc" stroke-width="1.8"/></svg>
<div class="t" style="left:931px;top:1169.44px;font-size:25px;line-height:25px;color:#fff;-webkit-text-stroke:0.3px #fff;">1</div>
<svg style="left:1107px;top:1169.7px" width="10" height="18" viewBox="0 0 10 18"><path d="M0.8 0.5 L9.5 8.7 L0.8 17" fill="none" stroke="#dcdcdc" stroke-width="1.8"/></svg>
<div class="t" style="left:1152px;top:1169.44px;font-size:25px;line-height:25px;color:#fff;-webkit-text-stroke:0.3px #fff;">0</div>
<div class="t" style="left:1315.5px;top:1169.44px;font-size:25px;line-height:25px;color:#fff;letter-spacing:0.85px;-webkit-text-stroke:0.3px #fff;">8000+</div>
<svg style="left:1698px;top:1172.2px" width="27" height="20" viewBox="0 0 27 20"><path d="M1.5 10 L8.5 17 L25 1" fill="none" stroke="#3f8c2e" stroke-width="3.6"/></svg>
<svg style="left:1898px;top:1172.2px" width="27" height="20" viewBox="0 0 27 20"><path d="M1.5 10 L8.5 17 L25 1" fill="none" stroke="#3f8c2e" stroke-width="3.6"/></svg>
<svg style="left:2098px;top:1172.2px" width="27" height="20" viewBox="0 0 27 20"><path d="M1.5 10 L8.5 17 L25 1" fill="none" stroke="#3f8c2e" stroke-width="3.6"/></svg>
<div class="b" style="left:112px;top:1212px;width:2087px;height:58px;background:#2d3134;"></div>
<div class="b" style="left:112px;top:1270px;width:2087px;height:2px;background:#5c5c5c;"></div>
<div class="b" style="left:140px;top:1224.2px;width:28px;height:28px;background:rgba(255,255,255,0.03);border:2.3px solid #e0e0e0;border-radius:5px;"></div>
<svg style="left:218px;top:1220.2px" width="183.4" height="42" viewBox="0 0 183.4 42"><rect x="1" y="1" width="181.4" height="40" rx="20" fill="none" stroke="#a4a4a4" stroke-width="1.9" stroke-dasharray="0.01 3.35" stroke-linecap="round"/></svg>
<div class="t" style="left:230.5px;top:1229.44px;font-size:25px;line-height:25px;color:#fff;letter-spacing:0.35px;-webkit-text-stroke:0.3px #fff;transform:scaleX(0.9530);transform-origin:0 50%;">B07Q5VMTZS</div>
<div class="t" style="left:595.5px;top:1229.44px;font-size:25px;line-height:25px;color:#fff;-webkit-text-stroke:0.3px #fff;">3</div>
<svg style="left:887px;top:1229.7px" width="10" height="18" viewBox="0 0 10 18"><path d="M0.8 0.5 L9.5 8.7 L0.8 17" fill="none" stroke="#dcdcdc" stroke-width="1.8"/></svg>
<div class="t" style="left:931px;top:1229.44px;font-size:25px;line-height:25px;color:#fff;-webkit-text-stroke:0.3px #fff;">1</div>
<svg style="left:1107px;top:1229.7px" width="10" height="18" viewBox="0 0 10 18"><path d="M0.8 0.5 L9.5 8.7 L0.8 17" fill="none" stroke="#dcdcdc" stroke-width="1.8"/></svg>
<div class="t" style="left:1152px;top:1229.44px;font-size:25px;line-height:25px;color:#fff;-webkit-text-stroke:0.3px #fff;">0</div>
<div class="t" style="left:1315.5px;top:1229.44px;font-size:25px;line-height:25px;color:#fff;letter-spacing:0.85px;-webkit-text-stroke:0.3px #fff;">2000+</div>
<svg style="left:1698px;top:1232.2px" width="27" height="20" viewBox="0 0 27 20"><path d="M1.5 10 L8.5 17 L25 1" fill="none" stroke="#3f8c2e" stroke-width="3.6"/></svg>
<svg style="left:1898px;top:1232.2px" width="27" height="20" viewBox="0 0 27 20"><path d="M1.5 10 L8.5 17 L25 1" fill="none" stroke="#3f8c2e" stroke-width="3.6"/></svg>
<svg style="left:2098px;top:1232.2px" width="27" height="20" viewBox="0 0 27 20"><path d="M1.5 10 L8.5 17 L25 1" fill="none" stroke="#3f8c2e" stroke-width="3.6"/></svg>
<div class="b" style="left:112px;top:1272px;width:2087px;height:58px;background:#26292c;"></div>
<div class="b" style="left:112px;top:1330px;width:2087px;height:2px;background:#5c5c5c;"></div>
<div class="b" style="left:140px;top:1284.2px;width:28px;height:28px;background:rgba(255,255,255,0.03);border:2.3px solid #e0e0e0;border-radius:5px;"></div>
<svg style="left:218px;top:1280.2px" width="182" height="42" viewBox="0 0 182 42"><rect x="1" y="1" width="180" height="40" rx="20" fill="none" stroke="#a4a4a4" stroke-width="1.9" stroke-dasharray="0.01 3.35" stroke-linecap="round"/></svg>
<div class="t" style="left:230.5px;top:1289.44px;font-size:25px;line-height:25px;color:#fff;letter-spacing:0.35px;-webkit-text-stroke:0.3px #fff;transform:scaleX(0.9292);transform-origin:0 50%;">B0BQJRCFQZ</div>
<div class="t" style="left:595.5px;top:1289.44px;font-size:25px;line-height:25px;color:#fff;-webkit-text-stroke:0.3px #fff;">1</div>
<svg style="left:887px;top:1289.7px" width="10" height="18" viewBox="0 0 10 18"><path d="M0.8 0.5 L9.5 8.7 L0.8 17" fill="none" stroke="#dcdcdc" stroke-width="1.8"/></svg>
<div class="t" style="left:931px;top:1289.44px;font-size:25px;line-height:25px;color:#fff;-webkit-text-stroke:0.3px #fff;">1</div>
<svg style="left:1107px;top:1289.7px" width="10" height="18" viewBox="0 0 10 18"><path d="M0.8 0.5 L9.5 8.7 L0.8 17" fill="none" stroke="#dcdcdc" stroke-width="1.8"/></svg>
<div class="t" style="left:1152px;top:1289.44px;font-size:25px;line-height:25px;color:#fff;-webkit-text-stroke:0.3px #fff;">0</div>
<div class="t" style="left:1315.5px;top:1289.44px;font-size:25px;line-height:25px;color:#fff;letter-spacing:0.85px;-webkit-text-stroke:0.3px #fff;">6000+</div>
<svg style="left:1698px;top:1292.2px" width="27" height="20" viewBox="0 0 27 20"><path d="M1.5 10 L8.5 17 L25 1" fill="none" stroke="#3f8c2e" stroke-width="3.6"/></svg>
<svg style="left:1898px;top:1292.2px" width="27" height="20" viewBox="0 0 27 20"><path d="M1.5 10 L8.5 17 L25 1" fill="none" stroke="#3f8c2e" stroke-width="3.6"/></svg>
<svg style="left:2098px;top:1292.2px" width="27" height="20" viewBox="0 0 27 20"><path d="M1.5 10 L8.5 17 L25 1" fill="none" stroke="#3f8c2e" stroke-width="3.6"/></svg>
<div class="b" style="left:112px;top:1332px;width:2087px;height:58px;background:#2d3134;"></div>
<div class="b" style="left:112px;top:1390px;width:2087px;height:2px;background:#5c5c5c;"></div>
<div class="b" style="left:140px;top:1344.2px;width:28px;height:28px;background:rgba(255,255,255,0.03);border:2.3px solid #e0e0e0;border-radius:5px;"></div>
<svg style="left:218px;top:1340.2px" width="183.4" height="42" viewBox="0 0 183.4 42"><rect x="1" y="1" width="181.4" height="40" rx="20" fill="none" stroke="#a4a4a4" stroke-width="1.9" stroke-dasharray="0.01 3.35" stroke-linecap="round"/></svg>
<div class="t" style="left:230.5px;top:1349.44px;font-size:25px;line-height:25px;color:#fff;letter-spacing:0.35px;-webkit-text-stroke:0.3px #fff;transform:scaleX(0.9858);transform-origin:0 50%;">B09Q4C5MJL</div>
<div class="t" style="left:595.5px;top:1349.44px;font-size:25px;line-height:25px;color:#fff;-webkit-text-stroke:0.3px #fff;">1</div>
<svg style="left:887px;top:1349.7px" width="10" height="18" viewBox="0 0 10 18"><path d="M0.8 0.5 L9.5 8.7 L0.8 17" fill="none" stroke="#dcdcdc" stroke-width="1.8"/></svg>
<div class="t" style="left:931px;top:1349.44px;font-size:25px;line-height:25px;color:#fff;-webkit-text-stroke:0.3px #fff;">1</div>
<svg style="left:1107px;top:1349.7px" width="10" height="18" viewBox="0 0 10 18"><path d="M0.8 0.5 L9.5 8.7 L0.8 17" fill="none" stroke="#dcdcdc" stroke-width="1.8"/></svg>
<div class="t" style="left:1152px;top:1349.44px;font-size:25px;line-height:25px;color:#fff;-webkit-text-stroke:0.3px #fff;">0</div>
<div class="t" style="left:1315.5px;top:1349.44px;font-size:25px;line-height:25px;color:#fff;letter-spacing:0.85px;-webkit-text-stroke:0.3px #fff;">7000+</div>
<svg style="left:1698px;top:1352.2px" width="27" height="20" viewBox="0 0 27 20"><path d="M1.5 10 L8.5 17 L25 1" fill="none" stroke="#3f8c2e" stroke-width="3.6"/></svg>
<svg style="left:1898px;top:1352.2px" width="27" height="20" viewBox="0 0 27 20"><path d="M1.5 10 L8.5 17 L25 1" fill="none" stroke="#3f8c2e" stroke-width="3.6"/></svg>
<svg style="left:2098px;top:1352.2px" width="27" height="20" viewBox="0 0 27 20"><path d="M1.5 10 L8.5 17 L25 1" fill="none" stroke="#3f8c2e" stroke-width="3.6"/></svg>
<div class="b" style="left:112px;top:1392px;width:2087px;height:58px;background:#26292c;"></div>
<div class="b" style="left:112px;top:1450px;width:2087px;height:2px;background:#5c5c5c;"></div>
<div class="b" style="left:140px;top:1404.2px;width:28px;height:28px;background:rgba(255,255,255,0.03);border:2.3px solid #e0e0e0;border-radius:5px;"></div>
<svg style="left:218px;top:1400.2px" width="179.7" height="42" viewBox="0 0 179.7 42"><rect x="1" y="1" width="177.7" height="40" rx="20" fill="none" stroke="#a4a4a4" stroke-width="1.9" stroke-dasharray="0.01 3.35" stroke-linecap="round"/></svg>
<div class="t" style="left:230.5px;top:1409.44px;font-size:25px;line-height:25px;color:#fff;letter-spacing:0.35px;-webkit-text-stroke:0.3px #fff;transform:scaleX(0.9797);transform-origin:0 50%;">B079HV3TC9</div>
<div class="t" style="left:595.5px;top:1409.44px;font-size:25px;line-height:25px;color:#fff;-webkit-text-stroke:0.3px #fff;">5</div>
<svg style="left:887px;top:1409.7px" width="10" height="18" viewBox="0 0 10 18"><path d="M0.8 0.5 L9.5 8.7 L0.8 17" fill="none" stroke="#dcdcdc" stroke-width="1.8"/></svg>
<div class="t" style="left:931px;top:1409.44px;font-size:25px;line-height:25px;color:#fff;-webkit-text-stroke:0.3px #fff;">1</div>
<svg style="left:1107px;top:1409.7px" width="10" height="18" viewBox="0 0 10 18"><path d="M0.8 0.5 L9.5 8.7 L0.8 17" fill="none" stroke="#dcdcdc" stroke-width="1.8"/></svg>
<div class="t" style="left:1152px;top:1409.44px;font-size:25px;line-height:25px;color:#fff;-webkit-text-stroke:0.3px #fff;">0</div>
<div class="t" style="left:1315.5px;top:1409.44px;font-size:25px;line-height:25px;color:#fff;letter-spacing:0.85px;-webkit-text-stroke:0.3px #fff;">10000+</div>
<svg style="left:1698px;top:1412.2px" width="27" height="20" viewBox="0 0 27 20"><path d="M1.5 10 L8.5 17 L25 1" fill="none" stroke="#3f8c2e" stroke-width="3.6"/></svg>
<svg style="left:1898px;top:1412.2px" width="27" height="20" viewBox="0 0 27 20"><path d="M1.5 10 L8.5 17 L25 1" fill="none" stroke="#3f8c2e" stroke-width="3.6"/></svg>
<svg style="left:2098px;top:1412.2px" width="27" height="20" viewBox="0 0 27 20"><path d="M1.5 10 L8.5 17 L25 1" fill="none" stroke="#3f8c2e" stroke-width="3.6"/></svg>
<div class="b" style="left:112px;top:1452px;width:2087px;height:58px;background:#2d3134;"></div>
<div class="b" style="left:112px;top:1510px;width:2087px;height:2px;background:#5c5c5c;"></div>
<div class="b" style="left:140px;top:1464.2px;width:28px;height:28px;background:rgba(255,255,255,0.03);border:2.3px solid #e0e0e0;border-radius:5px;"></div>
<svg style="left:218px;top:1460.2px" width="175.3" height="42" viewBox="0 0 175.3 42"><rect x="1" y="1" width="173.3" height="40" rx="20" fill="none" stroke="#a4a4a4" stroke-width="1.9" stroke-dasharray="0.01 3.35" stroke-linecap="round"/></svg>
<div class="t" style="left:230.5px;top:1469.44px;font-size:25px;line-height:25px;color:#fff;letter-spacing:0.35px;-webkit-text-stroke:0.3px #fff;transform:scaleX(0.9275);transform-origin:0 50%;">B09VT1FCYN</div>
<div class="t" style="left:595.5px;top:1469.44px;font-size:25px;line-height:25px;color:#fff;-webkit-text-stroke:0.3px #fff;">2</div>
<div class="t" style="left:1315.5px;top:1469.44px;font-size:25px;line-height:25px;color:#fff;letter-spacing:0.85px;-webkit-text-stroke:0.3px #fff;">3000+</div>
<svg style="left:1698px;top:1472.2px" width="27" height="20" viewBox="0 0 27 20"><path d="M1.5 10 L8.5 17 L25 1" fill="none" stroke="#3f8c2e" stroke-width="3.6"/></svg>
<svg style="left:1898px;top:1472.2px" width="27" height="20" viewBox="0 0 27 20"><path d="M1.5 10 L8.5 17 L25 1" fill="none" stroke="#3f8c2e" stroke-width="3.6"/></svg>
<svg style="left:2098px;top:1472.2px" width="27" height="20" viewBox="0 0 27 20"><path d="M1.5 10 L8.5 17 L25 1" fill="none" stroke="#3f8c2e" stroke-width="3.6"/></svg>
<div class="b" style="left:472px;top:481px;width:2px;height:1038px;background:#3c3e40;"></div>
<div class="t" style="left:474px;top:502.28px;width:97px;overflow:hidden;font-size:24px;line-height:24px;color:#ababab;font-weight:700"><span style="position:relative;left:-16.5px">on</span></div>
<div class="b" style="left:474px;top:558px;width:26px;height:38px;background:#272b2e;border:2px solid #858585;border-left:none;"></div>
<svg style="left:522px;top:572px" width="20" height="20" viewBox="0 0 20 20"><path d="M1 1 L19 1 L12 9 L12 14.5 L7.5 18 L7.5 9 Z" fill="none" stroke="#e2e2e2" stroke-width="1.7" stroke-linejoin="miter"/></svg>
<div class="b" style="left:2198px;top:482px;width:44px;height:1037px;background:#2c3033;border-left:2px solid #484a4c;"></div>
<svg style="left:2209px;top:538px" width="22" height="19" viewBox="0 0 22 19"><rect x="0.8" y="0" width="2.3" height="18.3" fill="#e8e8e8"/><rect x="6.9" y="0" width="2.3" height="18.3" fill="#e8e8e8"/><rect x="13" y="0" width="2.3" height="18.3" fill="#e8e8e8"/><rect x="19" y="0" width="2.3" height="18.3" fill="#e8e8e8"/></svg>
<div class="t" style="left:2232.5px;top:570px;font-size:26.8px;line-height:26.8px;color:#f0f0f0;-webkit-text-stroke:0.35px #f0f0f0;transform-origin:0 0;transform:rotate(90deg);">Columns</div>
<svg style="left:2209.5px;top:723.5px" width="20" height="20" viewBox="0 0 20 20"><path d="M1 1 L19 1 L12 9 L12 14.5 L7.5 18 L7.5 9 Z" fill="none" stroke="#e2e2e2" stroke-width="1.7" stroke-linejoin="miter"/></svg>
<div class="t" style="left:2232.5px;top:755.5px;font-size:26.8px;line-height:26.8px;color:#f0f0f0;-webkit-text-stroke:0.35px #f0f0f0;transform-origin:0 0;transform:rotate(90deg);">Filters</div>
<div class="b" style="left:112px;top:1519px;width:2130px;height:75px;background:#2c3033;"></div>
<div class="b" style="left:112px;top:1518.5px;width:2130px;height:1.5px;background:#474747;"></div>
<div class="b" style="left:1876px;top:1532px;width:142px;height:41px;background:#2c3033;border:4px outset #777;border-color:#7c7c7c #1f1f1f #1f1f1f #7c7c7c;border-style:solid;"></div>
<div class="b" style="left:112px;top:1589.5px;width:2130px;height:2px;background:#3e3e3e;"></div>
<div class="t" style="left:1892px;top:1539.79px;font-size:26px;line-height:26px;color:#ffffff;letter-spacing:0.2px;-webkit-text-stroke:0.35px #fff;">All Filters</div>
<div class="t" style="left:2075.5px;top:1540.18px;font-size:24px;line-height:24px;color:#8a8c8e;font-weight:700;letter-spacing:-0.3px;">Rows:</div>
<div class="t" style="left:2154px;top:1538.49px;font-size:26px;line-height:26px;color:#ffffff;font-weight:700;">203</div>
<div class="b" style="left:1627.2px;top:195.5px;width:25.5px;height:9px;background:#e8412a;transform:rotate(110.75deg);"></div>
<div class="b" style="left:1609.2px;top:243.0px;width:25.5px;height:9px;background:#e8412a;transform:rotate(110.75deg);"></div>
<div class="b" style="left:1591.2px;top:290.5px;width:25.5px;height:9px;background:#e8412a;transform:rotate(110.75deg);"></div>
<div class="b" style="left:1573.2px;top:338.0px;width:25.5px;height:9px;background:#e8412a;transform:rotate(110.75deg);"></div>
<div class="b" style="left:1555.2px;top:385.5px;width:25.5px;height:9px;background:#e8412a;transform:rotate(110.75deg);"></div>
<svg style="left:0;top:0" width="1" height="1"><path d="M1531 415.4 L1578 433 L1537 470.2 Z" fill="#e8412a"/></svg>
</div>
<div class="b" style="left:112px;top:76px;width:2130px;height:1518px;border-radius:19px;border:2px solid rgba(255,255,255,0.32);border-bottom-color:rgba(160,180,210,0.5);"></div>
</body></html>
